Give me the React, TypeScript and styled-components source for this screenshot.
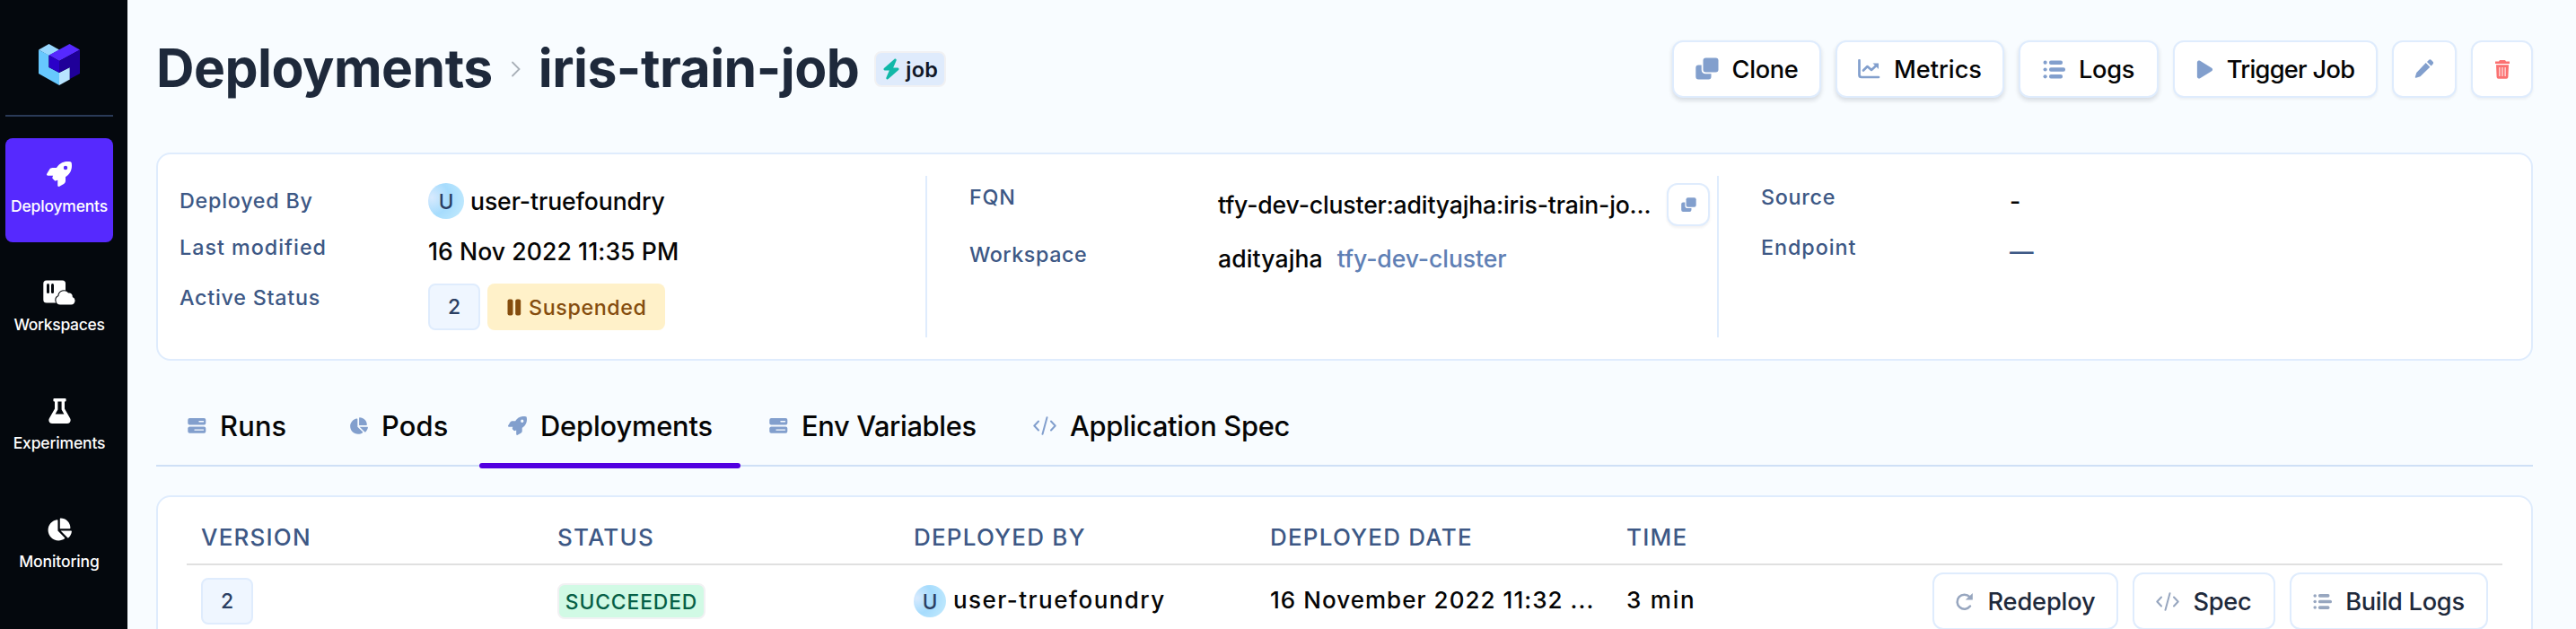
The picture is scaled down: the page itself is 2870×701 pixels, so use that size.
import type { ReactNode } from "react";
import styled, { createGlobalStyle } from "styled-components";
import { FaBolt, FaChartPie, FaPlay, FaRocket } from "react-icons/fa6";

const colors = {
  page: "#f8fcff",
  white: "#ffffff",
  black: "#050505",
  dark: "#1e293b",
  label: "#3d5885",
  icon: "#829fcd",
  border: "#dfecfd",
  purple: "#5629fe",
};

/* ========= icons ========== */

const Logo = () => (
  <svg width="46" height="46" viewBox="0 0 46 46">
    <path d="M0 6.5 11.5 0 23 6.5 11.5 13z" fill="#98d8fe" />
    <path d="M0 6.5 11.5 12.5V26L23 32v14L0 33z" fill="#67c8fe" />
    <path d="M23 32l11.8-6v13.5L23 46z" fill="#b8e4fe" />
    <path d="M11.5 12.5 34.5 0 46 6.5 23 19z" fill="#5629fe" />
    <path d="M11.5 12.5 23 19v13l-11.5-6z" fill="#2a00c8" />
    <path d="M23 19 46 6.5V33l-11.2 6V26L23 32z" fill="#1f0099" />
  </svg>
);

const WorkspaceIcon = () => (
  <svg width="36" height="28" viewBox="0 0 36 28">
    <rect x="0.3" y="0.5" width="24.7" height="25" rx="3.5" fill="#fff" />
    <rect x="4" y="4" width="3" height="11" rx="1.5" fill="#04080d" />
    <rect x="9" y="4" width="3" height="11" rx="1.5" fill="#04080d" />
    <path
      d="M19 27.5h12.3a4.4 4.4 0 0 0 1.4-8.5 3.8 3.8 0 0 0-4.6-4.4 6 6 0 0 0-10.7 3.5A4.9 4.9 0 0 0 19 27.5z"
      fill="#fff"
      stroke="#04080d"
      strokeWidth="2.2"
      paintOrder="stroke"
    />
  </svg>
);

const FlaskIcon = () => (
  <svg width="25" height="28" viewBox="0 0 25 28">
    <path
      fill="#fff"
      fillRule="evenodd"
      d="M6.4 0h12.2a1 1 0 0 1 1 1v1.4a1 1 0 0 1-1 1H18v8.2l6.1 10.6c1.5 2.7-.3 5.8-3.3 5.8H4.2c-3 0-4.8-3.1-3.3-5.8L7 11.6V3.4h-.6a1 1 0 0 1-1-1V1a1 1 0 0 1 1-1zM10.400 3.400v9L7.600 17.600h9.800L14.600 12.400v-9z"
    />
  </svg>
);

const CloneIcon = ({ size = 26 }: { size?: number }) => (
  <svg width={size} height={size} viewBox="0 0 26 25" fill="currentColor">
    <path d="M11.500 0H22.500a3 3 0 0 1 3 3V13a3 3 0 0 1-3 3H11.500a3 3 0 0 1-3-3V3a3 3 0 0 1 3-3z" />
    <path d="M3.300 8h3.400v5.500a4.300 4.300 0 0 0 4.300 4.300h6.500V21a3 3 0 0 1-3 3H3.300a3 3 0 0 1-3-3V11a3 3 0 0 1 3-3z" />
  </svg>
);

const ChartIcon = () => (
  <svg width="25" height="22" viewBox="0 0 25 22" fill="none" stroke="currentColor">
    <path d="M1.500 1.200V17.500a2.500 2.500 0 0 0 2.500 2.500H23" strokeWidth="2.700" strokeLinecap="round" />
    <path d="M6 12.500 10.500 8l4.500 4 6-5.500" strokeWidth="2.600" strokeLinecap="round" strokeLinejoin="round" />
    <path d="M16.500 4.500H23v6.500z" fill="currentColor" stroke="none" />
  </svg>
);

const ListIcon = ({ size = 25 }: { size?: number }) => (
  <svg width={size} height={size} viewBox="0 0 25 25" fill="currentColor">
    <circle cx="2.600" cy="4.700" r="2.100" />
    <circle cx="2.600" cy="12.500" r="2.100" />
    <circle cx="2.600" cy="20.300" r="2.100" />
    <rect x="7" y="2.500" width="15" height="4.400" rx="2" />
    <rect x="7" y="10.300" width="18" height="4.400" rx="2" />
    <rect x="7" y="18.100" width="15" height="4.400" rx="2" />
  </svg>
);

const PencilIcon = () => (
  <svg width="22" height="22" viewBox="0 0 22 22" fill="currentColor">
    <path d="M12.700 4.100 17.300 8.700 6.500 19.200 1.800 20.800a.8.8 0 0 1-1-1L2.300 15z" />
    <path d="M14 2.900 15.700 1.200a2.400 2.400 0 0 1 3.400 0l1.200 1.200a2.400 2.400 0 0 1 0 3.400L18.600 7.500z" />
  </svg>
);

const TrashIcon = () => (
  <svg width="18" height="21" viewBox="0 0 18 21">
    <path d="M6 0h6l1 1.500h4v2.500H1V1.500h4z" fill="currentColor" />
    <path d="M2 5.200h14l-.6 13.600a2 2 0 0 1-2 2H4.600a2 2 0 0 1-2-2z" fill="currentColor" />
    <path d="M5.900 8v10M9 8v10M12.100 8v10" stroke="#fff" strokeWidth="1" />
  </svg>
);

const ServerIcon = () => (
  <svg width="21" height="17" viewBox="0 0 21 17">
    <rect x="0.300" y="0" width="20" height="7.400" rx="2" fill="currentColor" />
    <rect x="0.300" y="9.400" width="20" height="7.400" rx="2" fill="currentColor" />
    <path d="M13 3.700h4.500M8 13.100h9.500" stroke="#f8fcff" strokeWidth="1.400" strokeLinecap="round" />
  </svg>
);

const CodeIcon = () => (
  <svg width="26" height="21" viewBox="0 0 26 21" fill="none" stroke="currentColor" strokeWidth="2" strokeLinecap="round" strokeLinejoin="round">
    <path d="M6 5.500 1.300 10.500 6 15.500M20 5.500l4.700 5-4.700 5M15.500 1.200l-5 18.600" />
  </svg>
);

const RefreshIcon = () => (
  <svg width="21" height="21" viewBox="0 0 21 21">
    <path d="M17 15.500a8 8 0 1 1-.6-10.300" fill="none" stroke="currentColor" strokeWidth="2.500" strokeLinecap="round" />
    <path d="M19.800 1v7.600h-8z" fill="currentColor" />
  </svg>
);

const PauseIcon = () => (
  <svg width="16" height="19" viewBox="0 0 16 19" fill="currentColor">
    <rect x="0.500" y="0.500" width="6" height="18" rx="2" />
    <rect x="9.200" y="0.500" width="6" height="18" rx="2" />
  </svg>
);

/* ========= page ========== */

const navItems = [
  { name: "Deployments", icon: <FaRocket />, spacing: -0.2, active: true },
  { name: "Workspaces", icon: <WorkspaceIcon />, spacing: -0.32 },
  { name: "Experiments", icon: <FlaskIcon />, spacing: -0.15 },
  { name: "Monitoring", icon: <FaChartPie />, spacing: -0.1 },
];

const tabs: { name: string; icon: ReactNode; width: number; spacing: number; active?: boolean }[] = [
  { name: "Runs", icon: <ServerIcon />, width: 180, spacing: 0.2 },
  { name: "Pods", icon: <FaChartPie />, width: 177, spacing: 0.2 },
  { name: "Deployments", icon: <FaRocket />, width: 291, spacing: -0.15, active: true },
  { name: "Env Variables", icon: <ServerIcon />, width: 294, spacing: -0.35 },
  { name: "Application Spec", icon: <CodeIcon />, width: 350, spacing: -0.27 },
];

export default function App() {
  return (
    <Page>
      <GlobalStyle />
      <Sidebar>
        <LogoBox>
          <Logo />
        </LogoBox>
        {navItems.map((item) => (
          <NavItem key={item.name} $active={item.active}>
            <NavIcon>{item.icon}</NavIcon>
            <NavLabel $spacing={item.spacing}>{item.name}</NavLabel>
          </NavItem>
        ))}
      </Sidebar>

      <Main>
        <Header>
          <Title>Deployments</Title>
          <Chevron width="12" height="18" viewBox="0 0 12 18">
            <path d="M2 1.500 9.500 9 2 16.500" />
          </Chevron>
          <Title>iris-train-job</Title>
          <JobBadge>
            <FaBolt />
            job
          </JobBadge>
          <Actions>
            <Button $width={166} $spacing={-0.32} $raised>
              <CloneIcon />
              Clone
            </Button>
            <Button $width={188} $spacing={-0.01} $raised>
              <ChartIcon />
              Metrics
            </Button>
            <Button $width={156} $spacing={-0.3} $raised>
              <ListIcon />
              Logs
            </Button>
            <Button $width={228} $spacing={-0.7}>
              <PlayIcon />
              Trigger Job
            </Button>
            <Button $width={72}>
              <PencilIcon />
            </Button>
            <Button $width={69} $danger>
              <TrashIcon />
            </Button>
          </Actions>
        </Header>

        <Details>
          <Column $first>
            <Field $center>
              <Label>Deployed By</Label>
              <User>
                <Avatar $size={40}>U</Avatar>
                <Value>user-truefoundry</Value>
              </User>
            </Field>
            <Field>
              <Label $spacing={1}>Last modified</Label>
              <Value $spacing={0.06}>16 Nov 2022 11:35 PM</Value>
            </Field>
            <Field>
              <Label>Active Status</Label>
              <Status>
                <Version>2</Version>
                <Suspended>
                  <PauseIcon />
                  Suspended
                </Suspended>
              </Status>
            </Field>
          </Column>
          <Column>
            <Field>
              <Label>FQN</Label>
              <Fqn>
                <Value $spacing={-0.16}>tfy-dev-cluster:adityajha:iris-train-jo...</Value>
                <CopyButton>
                  <CloneIcon size={17} />
                </CopyButton>
              </Fqn>
            </Field>
            <Field>
              <Label $spacing={0.55}>Workspace</Label>
              <Workspace>
                <Value $spacing={0.1}>adityajha</Value>
                <Value $color="#5f80b5">tfy-dev-cluster</Value>
              </Workspace>
            </Field>
          </Column>
          <Column $last>
            <Field>
              <Label $spacing={0.7}>Source</Label>
              <Value>-</Value>
            </Field>
            <Field>
              <Label $spacing={0.95}>Endpoint</Label>
              <Value $color={colors.label}>—</Value>
            </Field>
          </Column>
        </Details>

        <Tabs>
          {tabs.map((tab) => (
            <Tab key={tab.name} $width={tab.width} $spacing={tab.spacing} $active={tab.active}>
              {tab.icon}
              {tab.name}
            </Tab>
          ))}
        </Tabs>

        <TableCard>
          <HeadRow>
            <HeadCell>VERSION</HeadCell>
            <HeadCell>STATUS</HeadCell>
            <HeadCell>DEPLOYED BY</HeadCell>
            <HeadCell>DEPLOYED DATE</HeadCell>
            <HeadCell>TIME</HeadCell>
          </HeadRow>
          <Row>
            <Cell>
              <Version>2</Version>
            </Cell>
            <Cell>
              <Succeeded>SUCCEEDED</Succeeded>
            </Cell>
            <Cell>
              <User $gap={8}>
                <Avatar $size={36}>U</Avatar>
                <CellText $spacing={1.45}>user-truefoundry</CellText>
              </User>
            </Cell>
            <Cell>
              <CellText $spacing={1.04}>16 November 2022 11:32 ...</CellText>
            </Cell>
            <CellText $spacing={1.8}>3 min</CellText>
            <RowActions>
              <Button $width={207} $spacing={-0.13} $muted>
                <RefreshIcon />
                Redeploy
              </Button>
              <Button $width={159} $spacing={-0.2} $muted>
                <CodeIcon />
                Spec
              </Button>
              <Button $width={221} $spacing={-0.26} $muted>
                <ListIcon size={21} />
                Build Logs
              </Button>
            </RowActions>
          </Row>
        </TableCard>
      </Main>
    </Page>
  );
}

/* ========= styled-components ========== */

const GlobalStyle = createGlobalStyle`
  * {
    box-sizing: border-box;
  }
  body {
    margin: 0;
    overflow: hidden;
    background: ${colors.page};
    font-family: Inter, "Liberation Sans", sans-serif;
    font-weight: 500;
  }
  svg {
    flex-shrink: 0;
  }
`;

const Page = styled.div`
  display: flex;
  height: 100vh;
  overflow: hidden;
`;

const Sidebar = styled.nav`
  width: 142px;
  flex-shrink: 0;
  padding: 0 16px 0 6px;
  display: flex;
  flex-direction: column;
  gap: 16px;
  background: #04080d;
`;

const LogoBox = styled.div`
  height: 130px;
  flex-shrink: 0;
  margin-bottom: 8px;
  padding-top: 49px;
  display: flex;
  justify-content: center;
  align-items: flex-start;
  border-bottom: 2px solid #2a3a57;
`;

const NavItem = styled.div<{ $active?: boolean }>`
  height: 116px;
  flex-shrink: 0;
  padding-top: 26px;
  display: flex;
  flex-direction: column;
  align-items: center;
  gap: 10px;
  border-radius: 8px;
  color: ${colors.white};
  background: ${({ $active }) => ($active ? colors.purple : "transparent")};
`;

const NavIcon = styled.div`
  height: 28px;
  display: flex;
  align-items: center;
  font-size: 28px;
`;

const NavLabel = styled.div<{ $spacing: number }>`
  font-size: 17.5px;
  line-height: 24px;
  white-space: nowrap;
  letter-spacing: ${({ $spacing }) => $spacing}px;
`;

const Main = styled.main`
  flex: 1;
  min-width: 0;
  padding: 45px 48px 0 32px;
`;

const Header = styled.header`
  height: 64px;
  display: flex;
  align-items: center;
`;

const Title = styled.h1`
  margin: 0;
  padding-bottom: 3px;
  font-size: 58.8px;
  line-height: 64px;
  font-weight: 700;
  letter-spacing: -0.5px;
  color: ${colors.dark};
`;

const Chevron = styled.svg`
  margin: 0 19px 0 20px;
  fill: none;
  stroke: #a9b0b8;
  stroke-width: 1.8;
  stroke-linecap: round;
`;

const JobBadge = styled.div`
  width: 80px;
  height: 40px;
  margin-left: 17px;
  display: flex;
  align-items: center;
  justify-content: center;
  gap: 6px;
  border: 2px solid #f1f1f3;
  border-radius: 8px;
  background: #dfebfc;
  color: #111827;
  font-size: 23.5px;
  font-weight: 600;
  letter-spacing: 0.3px;

  svg {
    width: 20px;
    height: 26px;
    color: #10b8a8;
  }
`;

const Actions = styled.div`
  margin-left: auto;
  display: flex;
  gap: 16px;
`;

const PlayIcon = styled(FaPlay)`
  width: 19px;
  height: 23px;
`;

const Button = styled.button<{
  $width: number;
  $spacing?: number;
  $raised?: boolean;
  $danger?: boolean;
  $muted?: boolean;
}>`
  width: ${({ $width }) => $width}px;
  height: 64px;
  padding: 0;
  display: flex;
  align-items: center;
  justify-content: center;
  gap: 15px;
  border: 2px solid ${colors.border};
  border-radius: 12px;
  background: ${colors.white};
  box-shadow: ${({ $raised, $muted }) =>
    $muted ? "none" : $raised ? "0 3px 5px rgba(15, 23, 42, 0.14)" : "0 2px 3px rgba(15, 23, 42, 0.05)"};
  font-family: inherit;
  font-size: 27.2px;
  font-weight: 500;
  letter-spacing: ${({ $spacing = 0 }) => $spacing}px;
  white-space: nowrap;
  color: ${({ $muted }) => ($muted ? colors.dark : colors.black)};

  svg {
    color: ${({ $danger, $muted }) => ($danger ? "#fb7171" : $muted ? "#97a6bf" : colors.icon)};
  }
`;

const Details = styled.section`
  height: 232px;
  margin-top: 61px;
  padding: 24px 0;
  display: flex;
  border: 2px solid ${colors.border};
  border-radius: 16px;
  background: ${colors.white};
`;

const Column = styled.div<{ $first?: boolean; $last?: boolean }>`
  width: ${({ $first }) => ($first ? 857 : 882)}px;
  padding: 8px 0 0 ${({ $first }) => ($first ? 24 : 47)}px;
  display: flex;
  flex-direction: column;
  gap: 16px;
  border-right: ${({ $last }) => ($last ? "none" : `2px solid ${colors.border}`)};
`;

const Field = styled.div<{ $center?: boolean }>`
  display: flex;
  align-items: ${({ $center }) => ($center ? "center" : "flex-start")};
`;

const Label = styled.div<{ $spacing?: number }>`
  width: 277px;
  flex-shrink: 0;
  font-size: 23.3px;
  line-height: 32px;
  letter-spacing: ${({ $spacing = 0.75 }) => $spacing}px;
  color: ${colors.label};
`;

const Value = styled.div<{ $spacing?: number; $color?: string }>`
  font-size: 26.6px;
  line-height: 40px;
  letter-spacing: ${({ $spacing = -0.1 }) => $spacing}px;
  white-space: nowrap;
  color: ${({ $color = colors.black }) => $color};
`;

const User = styled.div<{ $gap?: number }>`
  display: flex;
  align-items: center;
  gap: ${({ $gap = 7 }) => $gap}px;
`;

const Avatar = styled.div<{ $size: number }>`
  width: ${({ $size }) => $size}px;
  height: ${({ $size }) => $size}px;
  display: flex;
  align-items: center;
  justify-content: center;
  border-radius: 50%;
  background: radial-gradient(circle at 10% 40%, #d8eafe 0%, #a6dcfd 45%, #bae6fd 80%);
  color: #2b3f63;
  font-size: 22.5px;
`;

const Status = styled.div`
  display: flex;
  gap: 8px;
`;

const Version = styled.div`
  width: 58px;
  height: 52px;
  display: flex;
  align-items: center;
  justify-content: center;
  border: 2px solid ${colors.border};
  border-radius: 8px;
  background: #eff6ff;
  color: #2b3f63;
  font-size: 23px;
`;

const Suspended = styled.div`
  width: 198px;
  height: 52px;
  padding-left: 22px;
  display: flex;
  align-items: center;
  gap: 8px;
  border-radius: 8px;
  background: #fff1c9;
  color: #854d0e;
  font-size: 23.3px;
  letter-spacing: 0.6px;
`;

const Fqn = styled.div`
  flex: 1;
  padding-right: 8px;
  display: flex;
  align-items: center;
  justify-content: space-between;
`;

const CopyButton = styled.button`
  width: 48px;
  height: 48px;
  padding: 0;
  display: flex;
  align-items: center;
  justify-content: center;
  border: 2px solid ${colors.border};
  border-radius: 12px;
  background: ${colors.white};
  box-shadow: 0 2px 3px rgba(15, 23, 42, 0.06);
  color: ${colors.icon};
`;

const Workspace = styled.div`
  display: flex;
  gap: 16px;
`;

const Tabs = styled.div`
  height: 90px;
  margin-top: 28px;
  padding-left: 3px;
  display: flex;
  border-bottom: 2px solid #cfe0f6;
`;

const Tab = styled.div<{ $width: number; $spacing: number; $active?: boolean }>`
  position: relative;
  width: ${({ $width }) => $width}px;
  padding-left: 32px;
  display: flex;
  align-items: center;
  gap: 15px;
  font-size: 30.8px;
  letter-spacing: ${({ $spacing }) => $spacing}px;
  white-space: nowrap;
  color: ${colors.black};

  svg {
    font-size: 21px;
    color: ${colors.icon};
  }

  &::after {
    content: "";
    display: ${({ $active }) => ($active ? "block" : "none")};
    position: absolute;
    left: 0;
    right: 0;
    bottom: -4px;
    height: 6px;
    border-radius: 3px;
    background: #5200e0;
  }
`;

const TableCard = styled.section`
  height: 200px;
  margin-top: 32px;
  padding: 15px 32px 0;
  border: 2px solid ${colors.border};
  border-radius: 16px;
  background: ${colors.white};
`;

const HeadRow = styled.div`
  height: 61px;
  padding: 0 16px;
  display: flex;
  align-items: center;
  border-bottom: 2px solid #e0e0e0;
`;

const HeadCell = styled.div`
  width: 397px;
  font-size: 26px;
  letter-spacing: 1.2px;
  color: ${colors.label};
`;

const Row = styled.div`
  height: 80px;
  padding: 0 16px;
  display: flex;
  align-items: center;
`;

const Cell = styled.div`
  width: 397px;
  flex-shrink: 0;
`;

const CellText = styled.div<{ $spacing?: number }>`
  font-size: 26px;
  line-height: 36px;
  padding-bottom: 2px;
  letter-spacing: ${({ $spacing = 1 }) => $spacing}px;
  white-space: nowrap;
  color: ${colors.black};
`;

const Succeeded = styled.div`
  width: 165px;
  height: 40px;
  display: flex;
  align-items: center;
  justify-content: center;
  border: 2px solid #f1f1f3;
  border-radius: 8px;
  background: #d1fae5;
  color: #065f46;
  font-size: 22.8px;
  letter-spacing: 0.9px;
`;

const RowActions = styled.div`
  margin-left: auto;
  display: flex;
  gap: 16px;
`;
